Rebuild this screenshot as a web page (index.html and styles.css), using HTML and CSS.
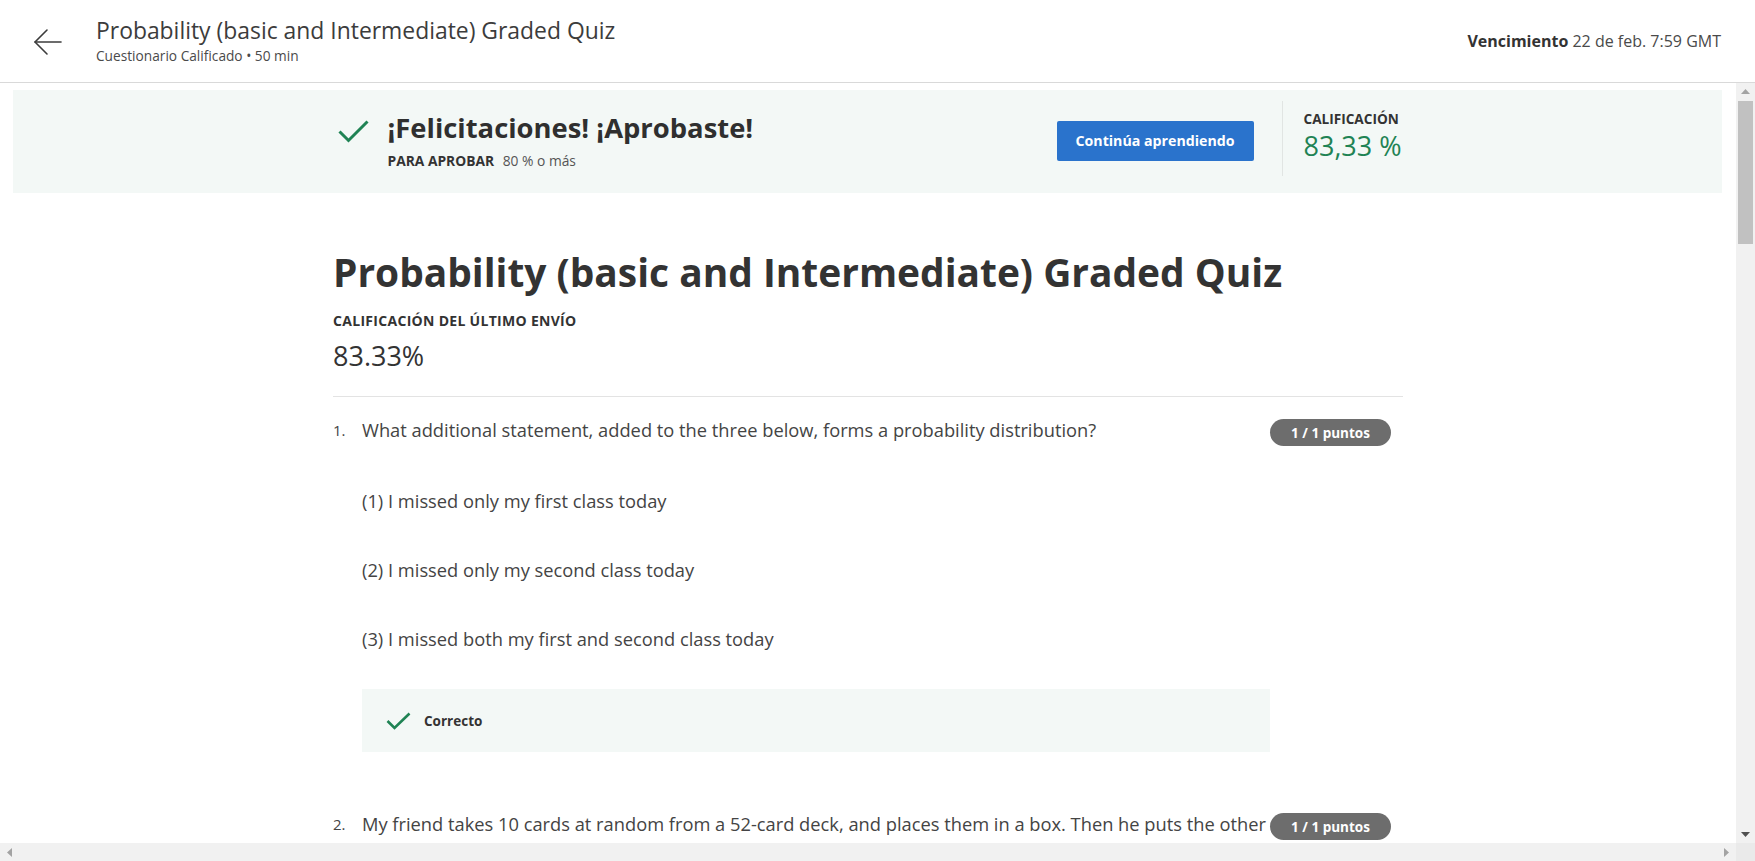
FILE: index.html
```html
<!DOCTYPE html>
<html lang="es">
<head>
<meta charset="utf-8">
<title>Probability (basic and Intermediate) Graded Quiz</title>
<link rel="stylesheet" href="styles.css">
</head>
<body>
<header class="topbar">
  <a class="back" href="#" aria-label="Volver">
    <svg width="30" height="28" viewBox="0 0 30 28" fill="none" stroke="#3c3c3c" stroke-width="1.6" stroke-linecap="round" stroke-linejoin="round"><path d="M28 14H2"/><path d="M14 2L2 14l12 12"/></svg>
  </a>
  <div class="top-titles">
    <h1 class="top-title">Probability (basic and Intermediate) Graded Quiz</h1>
    <div class="top-sub">Cuestionario Calificado • 50 min</div>
  </div>
  <div class="due"><strong>Vencimiento</strong> 22 de feb. 7:59 GMT</div>
</header>

<div class="viewport">
  <div class="view-row">
    <div class="scroller">
      <section class="banner">
        <div class="banner-inner">
          <div class="pass">
            <svg class="pass-check" width="31" height="23" viewBox="0 0 31 23" fill="none" stroke="#1f8354" stroke-width="3"><path d="M1.5 11.5l9 9L29.5 1.5"/></svg>
            <div>
              <div class="pass-title">¡Felicitaciones! ¡Aprobaste!</div>
              <div class="pass-sub"><strong>PARA APROBAR</strong> 80 % o más</div>
            </div>
          </div>
          <button class="btn">Continúa aprendiendo</button>
          <div class="vdiv"></div>
          <div class="grade">
            <div class="grade-label">CALIFICACIÓN</div>
            <div class="grade-value">83,33 %</div>
          </div>
        </div>
      </section>

      <main class="content">
        <h2 class="quiz-title">Probability (basic and Intermediate) Graded Quiz</h2>
        <div class="last-label">CALIFICACIÓN DEL ÚLTIMO ENVÍO</div>
        <div class="last-value">83.33%</div>
        <hr class="rule">

        <div class="questions">
          <div class="question">
            <div class="q-head">
              <span class="q-num">1.</span>
              <div class="q-text">What additional statement, added to the three below, forms a probability distribution?</div>
              <span class="badge">1 / 1 puntos</span>
            </div>
            <div class="q-body">
              <p class="stmt">(1) I missed only my first class today</p>
              <p class="stmt">(2) I missed only my second class today</p>
              <p class="stmt">(3) I missed both my first and second class today</p>
              <div class="feedback">
                <svg width="25" height="18" viewBox="0 0 25 18" fill="none" stroke="#1f8354" stroke-width="2.6"><path d="M1.5 9l7 7L23.5 1.5"/></svg>
                <span>Correcto</span>
              </div>
            </div>
          </div>

          <div class="question">
            <div class="q-head">
              <span class="q-num">2.</span>
              <div class="q-text">My friend takes 10 cards at random from a 52-card deck, and places them in a box. Then he puts the other 42 cards in a second box.</div>
              <span class="badge">1 / 1 puntos</span>
            </div>
          </div>
        </div>
      </main>
    </div>

    <div class="vbar" aria-hidden="true">
      <div class="sb-btn">
        <svg width="9" height="5" viewBox="0 0 9 5"><path d="M0 5L4.5 0L9 5Z" fill="#a3a3a3"/></svg>
      </div>
      <div class="vtrack"><div class="vthumb"></div></div>
      <div class="sb-btn">
        <svg width="9" height="5" viewBox="0 0 9 5"><path d="M0 0L4.5 5L9 0Z" fill="#505050"/></svg>
      </div>
    </div>
  </div>

  <div class="hbar" aria-hidden="true">
    <div class="sb-btn">
      <svg width="5" height="9" viewBox="0 0 5 9"><path d="M5 0L0 4.5L5 9Z" fill="#a3a3a3"/></svg>
    </div>
    <div class="htrack"></div>
    <div class="sb-btn">
      <svg width="5" height="9" viewBox="0 0 5 9"><path d="M0 0L5 4.5L0 9Z" fill="#a3a3a3"/></svg>
    </div>
    <div class="corner"></div>
  </div>
</div>
</body>
</html>
```
FILE: styles.css
```css
* { box-sizing: border-box; }

html, body {
  margin: 0;
  height: 100%;
  overflow: hidden;
}

body {
  font-family: "Open Sans", "Noto Sans", sans-serif;
  color: #373a3c;
  background: #fff;
}

/* ---------- top bar ---------- */
.topbar {
  height: 83px;
  border-bottom: 1px solid #d9d9d9;
  display: flex;
  align-items: center;
  padding: 0 34px 0 33px;
}

.back {
  display: flex;
  width: 30px;
  height: 28px;
  margin-top: 1px;
}

.top-titles {
  margin-left: 33px;
  flex: 1;
}

.top-title {
  margin: 0;
  font-size: 22.9px;
  font-weight: 400;
  line-height: 28px;
  color: #3c3c3c;
}

.top-sub {
  margin-top: 2px;
  font-size: 13.7px;
  line-height: 18px;
  color: #4a4a4a;
}

.due {
  font-size: 16px;
  color: #4a4a4a;
}

.due strong {
  color: #333;
  font-weight: 700;
}

/* ---------- viewport + scrollbars ---------- */
.viewport {
  height: calc(100% - 83px);
  display: flex;
  flex-direction: column;
}

.view-row {
  flex: 1;
  min-height: 0;
  display: flex;
}

.scroller {
  flex: 1;
  min-width: 0;
  overflow: hidden;
}

.vbar {
  width: 19px;
  background: #f1f1f1;
  display: flex;
  flex-direction: column;
}

.sb-btn {
  flex: none;
  width: 19px;
  height: 17px;
  display: flex;
  align-items: center;
  justify-content: center;
}

.vtrack {
  flex: 1;
  padding: 1px 2px 0 2px;
}

.vthumb {
  height: 143px;
  background: #c1c1c1;
}

.hbar {
  height: 18px;
  flex: none;
  background: #f1f1f1;
  display: flex;
}

.hbar .sb-btn {
  height: 18px;
}

.htrack {
  flex: 1;
}

.corner {
  width: 19px;
  background: #eaeaea;
}

/* ---------- banner ---------- */
.banner {
  margin: 7px 14px 0 13px;
  height: 103px;
  background: #f3f8f6;
}

.banner-inner {
  width: 1070px;
  margin: 0 auto;
  display: flex;
  align-items: center;
  height: 100%;
}

.pass {
  flex: 1;
  display: flex;
  align-items: flex-start;
  padding-left: 5px;
  margin-bottom: 2px;
}

.pass-check {
  margin-top: 9px;
  margin-right: 19px;
}

.pass-title {
  font-size: 27.4px;
  font-weight: 700;
  line-height: 34px;
  color: #2f2f2f;
}

.pass-sub {
  font-size: 13.8px;
  line-height: 18px;
  margin-top: 7px;
  color: #555;
}

.pass-sub strong {
  color: #333;
  margin-right: 5px;
}

.btn {
  font-family: inherit;
  width: 197px;
  height: 40px;
  border: 0;
  border-radius: 2px;
  background: #2a73cc;
  color: #fff;
  font-size: 14.2px;
  font-weight: 700;
  padding: 0;
  margin-bottom: 2px;
}

.vdiv {
  width: 1px;
  height: 75px;
  background: #e1e5e3;
  margin: 0 21px 7px 28px;
}

.grade {
  width: 99px;
  margin-bottom: 11px;
  white-space: nowrap;
}

.grade-label {
  font-size: 13.6px;
  font-weight: 700;
  line-height: 18px;
  color: #333;
}

.grade-value {
  margin-top: 1px;
  font-size: 27px;
  line-height: 34px;
  color: #1f8354;
}

/* ---------- main content ---------- */
.content {
  width: 1070px;
  margin: 0 auto;
  padding-top: 54px;
}

.quiz-title {
  margin: 0;
  font-size: 38.9px;
  font-weight: 700;
  line-height: 50px;
  color: #333;
}

.last-label {
  margin-top: 15px;
  font-size: 14px;
  font-weight: 700;
  letter-spacing: 0.3px;
  line-height: 18px;
  color: #333;
}

.last-value {
  margin-top: 9px;
  font-size: 27px;
  line-height: 34px;
  color: #333;
}

.rule {
  margin: 23px 0 0;
  border: 0;
  border-top: 1px solid #e3e3e3;
}

.questions {
  min-height: 3300px;
}

.question {
  padding-top: 19px;
}

.q-head {
  display: flex;
  align-items: flex-start;
}

.q-num {
  width: 29px;
  flex: none;
  font-size: 15px;
  line-height: 28px;
  color: #444;
}

.q-text {
  width: 908px;
  flex: none;
  font-size: 18.3px;
  line-height: 28px;
  color: #444;
}

.badge {
  flex: none;
  width: 121px;
  height: 27px;
  margin-top: 3px;
  border-radius: 14px;
  background: #6d6d6d;
  color: #fff;
  font-size: 13.5px;
  font-weight: 700;
  display: flex;
  align-items: center;
  justify-content: center;
}

.q-body {
  padding-left: 29px;
  padding-bottom: 39px;
}

.stmt {
  margin: 0;
  padding-top: 41px;
  font-size: 18.3px;
  line-height: 28px;
  color: #444;
}

.feedback {
  margin-top: 36px;
  width: 908px;
  height: 63px;
  background: #f3f8f6;
  display: flex;
  align-items: center;
  padding-left: 24px;
}

.feedback svg {
  margin-right: 13px;
}

.feedback span {
  font-size: 13.5px;
  font-weight: 700;
  color: #333;
}
```
